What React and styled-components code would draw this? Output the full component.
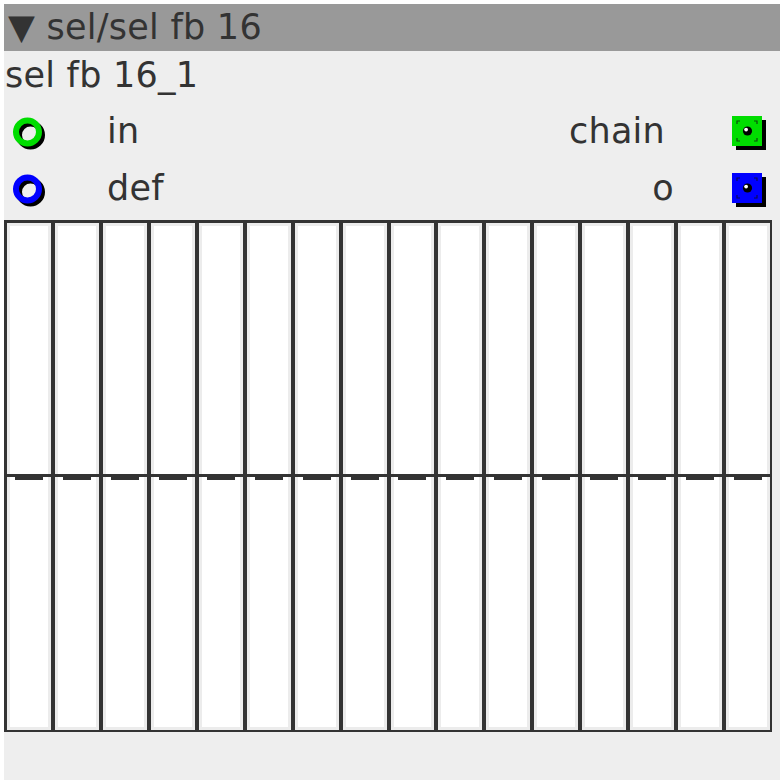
import React from "react";
import styled, { createGlobalStyle } from "styled-components";

const Global = createGlobalStyle`
  html, body { margin: 0; padding: 0; background: #ffffff; }
  body { padding: 4px; font-family: "DejaVu Sans", sans-serif; }
`;

const Panel = styled.div`
  width: 776px;
  height: 776px;
  background: #eeeeee;
  color: #333333;
  display: flex;
  flex-direction: column;
  font-size: 35px;
  letter-spacing: 0.25px;
`;

const Header = styled.div`
  height: 47px;
  line-height: 47px;
  background: #999999;
  padding-left: 4px;
  white-space: nowrap;
`;

const Row = styled.div`
  height: ${(p) => p.$h}px;
  display: flex;
  align-items: flex-start;
  line-height: 48px;
  box-sizing: border-box;
`;

const Title = styled.div`
  padding-left: 1px;
`;

const InPort = styled.div`
  width: 36px;
  height: 40px;
  margin: 7px 0 0 5px;
  flex: none;
`;

const InLabel = styled.div`
  margin-left: 62px;
  flex: 1;
`;

const OutLabel = styled.div`
  text-align: right;
  margin-right: ${(p) => p.$mr}px;
`;

const OutPort = styled.div`
  width: 40px;
  height: 40px;
  margin: 8px 9px 0 0;
  flex: none;
`;

const Sliders = styled.div`
  height: 512px;
  width: 768px;
  display: flex;
  background: #333333;
  box-sizing: border-box;
  padding: 1px 0 0 1px;
`;

const Slider = styled.div`
  flex: 1;
  position: relative;
  border: 2px solid #333333;
  background: #ffffff;
  box-shadow: inset 0 0 0 3px #ececec;
`;

const MidLine = styled.div`
  position: absolute;
  left: -2px;
  right: -2px;
  top: 251px;
  height: 3px;
  background: #333333;
`;

const Handle = styled.div`
  position: absolute;
  left: 50%;
  transform: translateX(-50%);
  width: 28px;
  top: 254px;
  height: 3px;
  background: #333333;
`;

const Ring = ({ color }) => (
  <svg width="36" height="40" viewBox="0 0 36 40">
    <circle cx="21.5" cy="21" r="11.5" fill="none" stroke="#000" strokeWidth="6" />
    <circle cx="18.5" cy="18" r="11.5" fill="none" stroke={color} strokeWidth="6" />
  </svg>
);

const Square = ({ color }) => (
  <svg width="40" height="40" viewBox="0 0 40 40">
    <rect x="5" y="5" width="30" height="30" fill="#000" />
    <rect x="1" y="1" width="30" height="30" fill={color} />
    <g stroke="#111" strokeWidth="1.2" fill="none" opacity="0.7">
      <path d="M6 9 V6 H9" />
      <path d="M23 6 H26 V9" />
      <path d="M6 23 V26 H9" />
      <path d="M23 26 H26 V23" />
    </g>
    <circle cx="16.5" cy="16" r="4.6" fill="#000" />
    <circle cx="15.1" cy="14.6" r="1.9" fill="#fff" />
  </svg>
);

export default function App() {
  const cols = Array.from({ length: 16 });
  return (
    <>
      <Global />
      <Panel>
        <Header>▼ sel/sel fb 16</Header>
        <Row $h={56}>
          <Title>sel fb 16_1</Title>
        </Row>
        <Row $h={57}>
          <InPort><Ring color="#00dd00" /></InPort>
          <InLabel>in</InLabel>
          <OutLabel $mr={66}>chain</OutLabel>
          <OutPort><Square color="#00dd00" /></OutPort>
        </Row>
        <Row $h={56}>
          <InPort><Ring color="#0000ff" /></InPort>
          <InLabel>def</InLabel>
          <OutLabel $mr={57}>o</OutLabel>
          <OutPort><Square color="#0000ff" /></OutPort>
        </Row>
        <Sliders>
          {cols.map((_, i) => (
            <Slider key={i}>
              <MidLine />
              <Handle />
            </Slider>
          ))}
        </Sliders>
      </Panel>
    </>
  );
}
